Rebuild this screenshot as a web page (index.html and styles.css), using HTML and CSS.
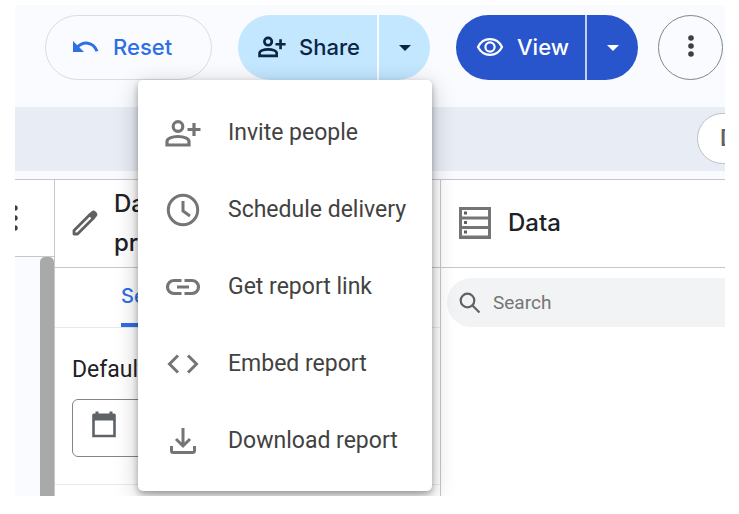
FILE: index.html
```html
<!DOCTYPE html>
<html lang="en">
<head>
    <meta charset="UTF-8">
    <meta name="viewport" content="width=device-width, initial-scale=1.0">
    <title>Report editor</title>
    <link rel="stylesheet" href="styles.css">
</head>
<body>
    <div class="app">
        <header class="toolbar">
            <button class="pill reset" type="button">
                <svg width="26" height="12" viewBox="0 0 26 12"><path d="M0 0v11h11z" fill="currentColor"/><path d="M4 6.500C10 .2 20 0 24 10.300" fill="none" stroke="currentColor" stroke-width="3"/></svg>
                Reset
            </button>
            <div class="split share">
                <button class="main" type="button" aria-haspopup="menu" aria-expanded="true">
                    <svg width="28" height="22" viewBox="0 0 36 28" fill="none" stroke="currentColor" stroke-width="3.400"><circle cx="13" cy="7" r="4.800"/><path d="M2 25.500v-3.500c0-3 5-5 11-5s11 2 11 5v3.500zM29 4v13M22.500 10.500h13"/></svg>
                    Share
                </button>
                <button class="arrow" type="button" aria-label="More share options"><svg width="12" height="6" viewBox="0 0 12 6"><path d="M0 0h12L6 6z" fill="currentColor"/></svg></button>
                <div class="menu" role="menu">
                    <button type="button" role="menuitem">
                        <svg width="36" height="28" viewBox="0 0 36 28" fill="none" stroke="currentColor" stroke-width="3.200"><circle cx="13" cy="7.500" r="4.800"/><path d="M2 26v-3.500c0-3 5-5 11-5s11 2 11 5V26zM29 4v13M22.500 10.500h13"/></svg>
                        Invite people
                    </button>
                    <button type="button" role="menuitem">
                        <svg width="36" height="34" viewBox="0 0 36 34" fill="none" stroke="currentColor" stroke-width="3"><circle cx="18" cy="17" r="14.700"/><path d="M18 8v10l7 5"/></svg>
                        Schedule delivery
                    </button>
                    <button type="button" role="menuitem">
                        <svg width="36" height="18" viewBox="0 0 36 18" fill="none" stroke="currentColor" stroke-width="3.200"><path d="M16.500 2.500H9a6.500 6.500 0 0 0 0 13h7.500M19.500 2.500H27a6.500 6.500 0 0 1 0 13h-7.500M12 9h12"/></svg>
                        Get report link
                    </button>
                    <button type="button" role="menuitem">
                        <svg width="36" height="20" viewBox="0 0 36 20" fill="none" stroke="currentColor" stroke-width="3"><path d="M13 1.500L4.500 10l8.500 8.500M23 1.500l8.500 8.500-8.500 8.500"/></svg>
                        Embed report
                    </button>
                    <button type="button" role="menuitem">
                        <svg width="36" height="28" viewBox="0 0 36 28" fill="none" stroke="currentColor" stroke-width="3"><path d="M18 1v17M11 12l7 7 7-7M6.500 19v5a1.500 1.500 0 0 0 1.500 1.500h20a1.500 1.500 0 0 0 1.500-1.500v-5"/></svg>
                        Download report
                    </button>
                </div>
            </div>
            <div class="split view">
                <button class="main" type="button">
                    <svg width="28" height="20" viewBox="0 0 28 20" fill="none" stroke="currentColor" stroke-width="2.200"><path d="M2 10C4.500 5 9 2.200 14 2.200s9.500 2.800 12 7.800c-2.500 5-7 7.800-12 7.800S4.500 15 2 10z"/><circle cx="14" cy="10" r="4.600"/></svg>
                    View
                </button>
                <button class="arrow" type="button" aria-label="More view options"><svg width="12" height="6" viewBox="0 0 12 6"><path d="M0 0h12L6 6z" fill="currentColor"/></svg></button>
            </div>
            <button class="more" type="button" aria-label="More options">
                <svg width="6" height="22" viewBox="0 0 6 22" fill="currentColor"><circle cx="3" cy="3" r="2.800"/><circle cx="3" cy="11" r="2.800"/><circle cx="3" cy="19" r="2.800"/></svg>
            </button>
        </header>

        <div class="filter-bar">
            <button class="filter" type="button">D</button>
        </div>

        <main class="panels">
            <section class="canvas">
                <div class="canvas-head">
                    <svg width="4" height="28" viewBox="0 0 4 28" fill="#3c4043"><circle cx="0" cy="4" r="2.700"/><circle cx="0" cy="14" r="2.700"/><circle cx="0" cy="24" r="2.700"/></svg>
                </div>
                <div class="canvas-body"><div class="thumb"></div></div>
            </section>

            <section class="properties">
                <div class="panel-head">
                    <svg width="26" height="26" viewBox="0 0 26 26"><path d="M2 20.500L18.500 4l3.500 3.500L5.500 24H2z" fill="none" stroke="#616161" stroke-width="2.800" stroke-linejoin="round"/><path d="M16 5l3.500-3.500a3 3 0 0 1 4 0l1 1a3 3 0 0 1 0 4L21 10z" fill="#616161"/></svg>
                    <h2>Date range<br>properties</h2>
                </div>
                <nav class="tabs"><a href="#setup">Setup</a></nav>
                <div class="field">
                    <label for="range">Default</label>
                    <button id="range" class="date" type="button">
                        <svg width="26" height="28" viewBox="0 0 26 28"><path d="M2.500 9v16h21V9" fill="none" stroke="#5f6368" stroke-width="2.600"/><path d="M1.200 4a1.500 1.500 0 0 1 1.500-1.500H4.500V.5h3v2h11v-2h3v2h1.800A1.500 1.500 0 0 1 24.800 4v5.500H1.200z" fill="#5f6368"/></svg>
                    </button>
                </div>
            </section>

            <section class="data">
                <div class="panel-head">
                    <svg width="34" height="34" viewBox="0 0 34 34"><path d="M1 1h32v32H1z" fill="#757575"/><path d="M4 4h26v6.500H4zM4 13.500h26v6.500H4zM4 23h26v6.500H4z" fill="#fff"/><path d="M6 5.500h3v3H6zM6 15h3v3H6zM6 24.500h3v3H6z" fill="#616161"/></svg>
                    <h2>Data</h2>
                </div>
                <label class="search">
                    <svg width="22" height="22" viewBox="0 0 22 22" fill="none" stroke="#616161" stroke-width="2.200"><circle cx="8.500" cy="8.500" r="6.800"/><path d="M13.500 13.500l7 7"/></svg>
                    <input type="text" placeholder="Search" aria-label="Search">
                </label>
            </section>
        </main>
    </div>
</body>
</html>
```

FILE: styles.css
```css
* {
    box-sizing: border-box;
}
body {
    display: flex;
    min-height: 100vh;
    margin: 0;
    padding: 5px 14px 18px 15px;
    background: #fff;
    font-family: Roboto, sans-serif;
    color: #202124;
}
button {
    margin: 0;
    padding: 0;
    border: 0;
    background: none;
    color: inherit;
    font: inherit;
}
svg {
    display: block;
    flex: none;
}
h2 {
    margin: 0;
    font: 500 24px/39px Inter, sans-serif;
}
.app {
    display: flex;
    flex-direction: column;
    flex: 1;
    min-width: 0;
    overflow: hidden;
    background: #f9fbff;
}

/* toolbar */
.toolbar {
    display: flex;
    justify-content: flex-end;
    gap: 26px;
    padding: 10px 2px 27px 0;
    font: 500 22px/28px Inter, sans-serif;
}
.pill,
.main,
.arrow,
.more {
    display: flex;
    align-items: center;
    height: 65px;
}
.pill,
.main {
    padding-bottom: 2px;
}
.pill {
    gap: 14px;
    width: 167px;
    padding-left: 27px;
    border: 1px solid #dadce0;
    border-radius: 33px;
    color: #2f6fe4;
}
.split {
    display: flex;
    position: relative;
    border-radius: 33px;
}
.main {
    gap: 13px;
    padding-left: 20px;
}
.arrow {
    justify-content: center;
    width: 53px;
    border-left: 2px solid #f9fbff;
}
.share {
    width: 192px;
    background: #c2e7ff;
    color: #0b2545;
}
.share .main,
.view .main {
    flex: 1;
}
.view {
    width: 182px;
    background: #2854cc;
    color: #fff;
}
.view .arrow {
    border-color: #c3d0f2;
}
.more {
    justify-content: center;
    width: 65px;
    margin-left: -6px;
    padding-bottom: 4px;
    border: 1px solid #80868b;
    border-radius: 50%;
    color: #3c4043;
}

/* share menu */
.menu {
    position: absolute;
    top: 100%;
    right: -2px;
    z-index: 2;
    width: 294px;
    padding: 14px 0 12px;
    border-radius: 5px;
    background: #fff;
    box-shadow: 0 3px 6px rgba(0, 0, 0, .3), 0 6px 24px rgba(0, 0, 0, .22);
}
.menu button {
    display: flex;
    align-items: center;
    gap: 27px;
    width: 100%;
    height: 77px;
    padding-left: 27px;
    color: #424242;
    font: 400 23px/28px Roboto, sans-serif;
}
.menu svg {
    color: #757575;
}

/* filter bar */
.filter-bar {
    display: flex;
    justify-content: flex-end;
    height: 64px;
    padding-top: 6px;
    background: #e8edf5;
}
.filter {
    width: 100px;
    height: 51px;
    margin-right: -72px;
    padding-left: 22px;
    border: 1px solid #bdc1c6;
    border-radius: 26px;
    background: #fff;
    color: #5f6368;
    font: 500 23px/28px Roboto, sans-serif;
    text-align: left;
}

/* panels */
.panels {
    display: flex;
    flex: 1;
    margin-top: 8px;
    border-top: 1px solid #c4c7cc;
}
.canvas {
    display: flex;
    flex-direction: column;
    width: 39px;
}
.canvas-head {
    height: 77px;
    padding-top: 24px;
    border-bottom: 1px solid #c4c7cc;
    background: #fff;
}
.canvas-body {
    display: flex;
    justify-content: flex-end;
    flex: 1;
}
.thumb {
    width: 14px;
    border-radius: 5px 5px 0 0;
    background: #a9a9a9;
}
.properties {
    width: 387px;
    border: solid #c4c7cc;
    border-width: 0 1px;
    background: #fff;
}
.panel-head {
    display: flex;
    align-items: center;
    gap: 16px;
    height: 88px;
    padding: 0 0 2px 17px;
    border-bottom: 1px solid #c4c7cc;
}
.tabs {
    display: flex;
    height: 60px;
    padding-left: 66px;
    border-bottom: 1px solid #e8eaed;
}
.tabs a {
    border-bottom: 4px solid #2f6fe4;
    color: #2f6fe4;
    font: 500 20px/56px Inter, sans-serif;
    text-decoration: none;
}
.field {
    padding: 28px 17px 27px;
    border-bottom: 1px solid #e8eaed;
}
.field label {
    display: block;
    margin-bottom: 15px;
    font: 400 23px/28px Roboto, sans-serif;
}
.date {
    display: flex;
    align-items: center;
    width: 100%;
    height: 58px;
    padding: 0 0 6px 18px;
    border: 1px solid #80868b;
    border-radius: 6px;
}
.data {
    flex: 1;
    min-width: 0;
    background: #fff;
}
.search {
    display: flex;
    align-items: center;
    gap: 12px;
    height: 49px;
    margin: 10px 0 0 6px;
    padding-left: 12px;
    border-radius: 25px 0 0 25px;
    background: #f1f3f4;
}
.search input {
    flex: 1;
    min-width: 0;
    padding: 0;
    border: 0;
    outline: 0;
    background: none;
    color: #202124;
    font: 400 19px/28px Roboto, sans-serif;
}
.search input::placeholder {
    color: #757575;
}
```
